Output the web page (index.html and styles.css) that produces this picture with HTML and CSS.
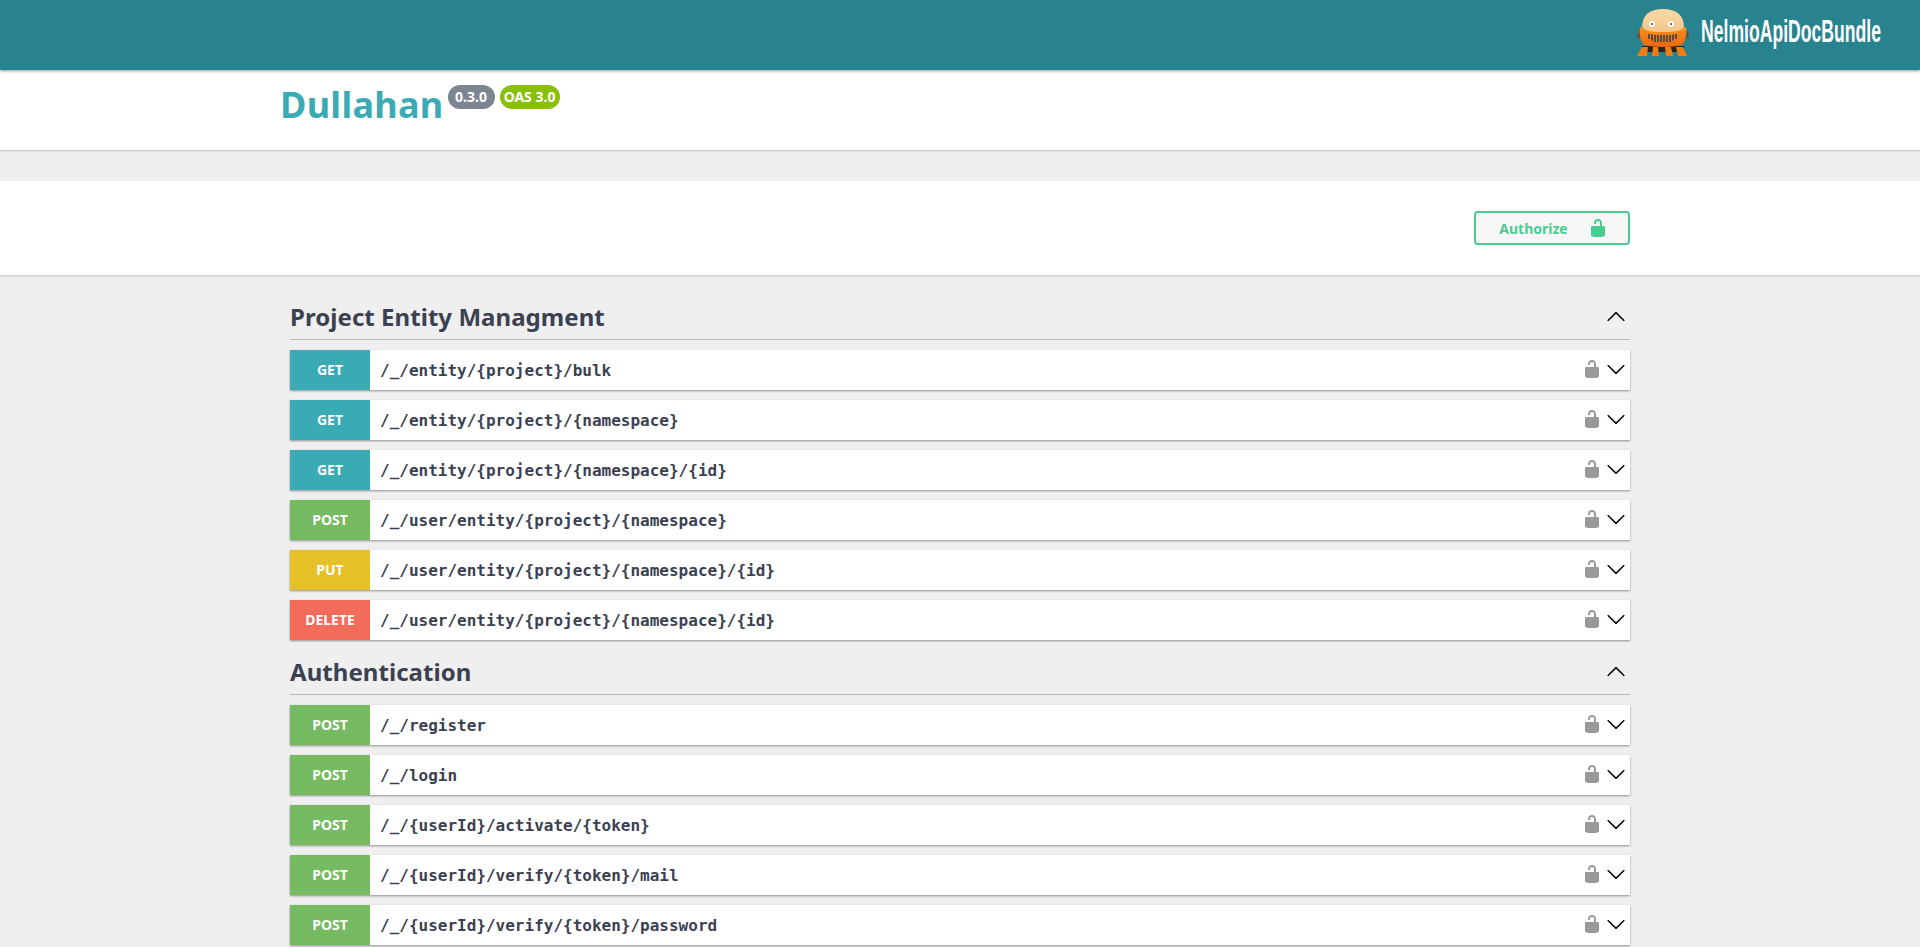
FILE: index.html
```html
<!DOCTYPE html>
<html lang="en">
<head>
    <meta charset="UTF-8">
    <title>Dullahan</title>
    <link rel="stylesheet" href="styles.css">
</head>
<body>
    <svg class="icon-defs" width="0" height="0">
        <symbol id="unlocked" viewBox="0 0 20 20">
            <path d="M15.8 8H14V5.6C14 2.703 12.665 1 10 1 7.334 1 6 2.703 6 5.6V6h2v-.801C8 3.754 8.797 3 10 3c1.203 0 2 .754 2 2.199V8H4c-.553 0-1 .646-1 1.199V17c0 .549.428 1.139.951 1.307l1.197.387C5.672 18.861 6.55 19 7.1 19h5.8c.549 0 1.428-.139 1.951-.307l1.196-.387c.524-.167.953-.757.953-1.306V9.199C17 8.646 16.352 8 15.8 8z"/>
        </symbol>
        <symbol id="arrow" viewBox="0 0 20 20">
            <path d="M17.418 6.109c.272-.268.709-.268.979 0s.271.701 0 .969l-7.908 7.83c-.27.268-.707.268-.979 0l-7.908-7.83c-.27-.268-.27-.701 0-.969.271-.268.709-.268.979 0L10 13.25l7.418-7.141z"/>
        </symbol>
    </svg>

    <div class="topbar">
        <svg class="mascot" width="70" height="66" viewBox="0 0 70 66">
            <defs>
                <linearGradient id="dome" x1="0" y1="0" x2="0" y2="1">
                    <stop offset="0" stop-color="#f8d9a8"/>
                    <stop offset="1" stop-color="#f3c58a"/>
                </linearGradient>
                <linearGradient id="shell" x1="0" y1="0" x2="0" y2="1">
                    <stop offset="0" stop-color="#f7931e"/>
                    <stop offset="1" stop-color="#e8650f"/>
                </linearGradient>
            </defs>
            <path d="M12 46h42v6H12z" fill="#2b2420"/>
            <path d="M7 56l5-9h6l-1 9zM22 56l1-9h5l1 9zM36 56l-1-9h6l2 9zM48 56l-2-9h7l4 9z" fill="#f07d14"/>
            <path d="M8 31l-1 6 4 2 2-7zM53 32l2 7 4-2-1-6z" fill="#55524e"/>
            <path d="M10 27c7 3 39 3 46 0 1 6 0 13-3 17-3 4-37 4-40 0-3-4-4-11-3-17z" fill="url(#shell)"/>
            <path d="M12 27c0-12 8-18 21-18s21 6 21 18c-2 3-7 5-21 5s-19-2-21-5z" fill="url(#dome)"/>
            <circle cx="22" cy="24" r="3" fill="#fff"/>
            <circle cx="41" cy="24" r="3" fill="#fff"/>
            <circle cx="22" cy="24" r="1" fill="#444"/>
            <circle cx="41" cy="24" r="1" fill="#444"/>
            <path d="M19 34v5M22 34.500v6M25 35v7M28 35v7M31 35v7M34 35v7M37 35v7M40 35v7M43 34.500v6M46 34v5" stroke="#5a4a3c" stroke-width="2" fill="none"/>
        </svg>
        <span class="brand">NelmioApiDocBundle</span>
    </div>

    <div class="info">
        <div class="wrapper info-inner">
            <h1 class="title">Dullahan</h1>
            <span class="badge badge-version">0.3.0</span>
            <span class="badge badge-oas">OAS 3.0</span>
        </div>
    </div>

    <div class="schemes">
        <div class="wrapper schemes-inner">
            <button class="authorize">
                <span>Authorize</span>
                <svg width="20" height="20"><use href="#unlocked"/></svg>
            </button>
        </div>
    </div>

    <div class="wrapper ops">
        <div class="tag">
            <h3>Project Entity Managment</h3>
            <svg width="20" height="20" class="arrow-up"><use href="#arrow"/></svg>
        </div>
        <div class="op"><span class="method get">GET</span><span class="path">/_/entity/{project}/bulk</span><svg width="20" height="20" class="lock"><use href="#unlocked"/></svg><svg width="20" height="20" class="arrow"><use href="#arrow"/></svg></div>
        <div class="op"><span class="method get">GET</span><span class="path">/_/entity/{project}/{namespace}</span><svg width="20" height="20" class="lock"><use href="#unlocked"/></svg><svg width="20" height="20" class="arrow"><use href="#arrow"/></svg></div>
        <div class="op"><span class="method get">GET</span><span class="path">/_/entity/{project}/{namespace}/{id}</span><svg width="20" height="20" class="lock"><use href="#unlocked"/></svg><svg width="20" height="20" class="arrow"><use href="#arrow"/></svg></div>
        <div class="op"><span class="method post">POST</span><span class="path">/_/user/entity/{project}/{namespace}</span><svg width="20" height="20" class="lock"><use href="#unlocked"/></svg><svg width="20" height="20" class="arrow"><use href="#arrow"/></svg></div>
        <div class="op"><span class="method put">PUT</span><span class="path">/_/user/entity/{project}/{namespace}/{id}</span><svg width="20" height="20" class="lock"><use href="#unlocked"/></svg><svg width="20" height="20" class="arrow"><use href="#arrow"/></svg></div>
        <div class="op"><span class="method delete">DELETE</span><span class="path">/_/user/entity/{project}/{namespace}/{id}</span><svg width="20" height="20" class="lock"><use href="#unlocked"/></svg><svg width="20" height="20" class="arrow"><use href="#arrow"/></svg></div>

        <div class="tag">
            <h3>Authentication</h3>
            <svg width="20" height="20" class="arrow-up"><use href="#arrow"/></svg>
        </div>
        <div class="op"><span class="method post">POST</span><span class="path">/_/register</span><svg width="20" height="20" class="lock"><use href="#unlocked"/></svg><svg width="20" height="20" class="arrow"><use href="#arrow"/></svg></div>
        <div class="op"><span class="method post">POST</span><span class="path">/_/login</span><svg width="20" height="20" class="lock"><use href="#unlocked"/></svg><svg width="20" height="20" class="arrow"><use href="#arrow"/></svg></div>
        <div class="op"><span class="method post">POST</span><span class="path">/_/{userId}/activate/{token}</span><svg width="20" height="20" class="lock"><use href="#unlocked"/></svg><svg width="20" height="20" class="arrow"><use href="#arrow"/></svg></div>
        <div class="op"><span class="method post">POST</span><span class="path">/_/{userId}/verify/{token}/mail</span><svg width="20" height="20" class="lock"><use href="#unlocked"/></svg><svg width="20" height="20" class="arrow"><use href="#arrow"/></svg></div>
        <div class="op"><span class="method post">POST</span><span class="path">/_/{userId}/verify/{token}/password</span><svg width="20" height="20" class="lock"><use href="#unlocked"/></svg><svg width="20" height="20" class="arrow"><use href="#arrow"/></svg></div>
    </div>
</body>
</html>
```

FILE: styles.css
```css
html, body {
    margin: 0;
    height: 100%;
    overflow: hidden;
}

body {
    background-color: #efefef;
    color: #3b4151;
    font-family: "Noto Sans", sans-serif;
}

.icon-defs {
    position: absolute;
}

.wrapper {
    width: 1340px;
    margin: 0 auto;
}

/* top bar */
.topbar {
    display: flex;
    align-items: center;
    justify-content: flex-end;
    height: 70px;
    padding-right: 40px;
    background-color: #28838f;
    box-shadow: 0 1px 3px rgba(0, 0, 0, 0.4);
    position: relative;
}

.mascot {
    margin-right: 1px;
    margin-top: -4px;
}

.brand {
    width: 179px;
    margin-top: -7px;
    font-family: "Liberation Sans", sans-serif;
    font-size: 32px;
    font-weight: bold;
    color: #fff;
    white-space: nowrap;
    transform: scaleX(0.55);
    transform-origin: left center;
}

/* title */
.info {
    height: 80px;
    background-color: #fff;
    border-bottom: 1px solid #ccc;
    box-shadow: 0 1px 1px rgba(0, 0, 0, 0.05);
}

.info-inner {
    display: flex;
    align-items: flex-start;
    padding-top: 15px;
    box-sizing: border-box;
    position: relative;
    left: -10px;
}

.title {
    margin: -5px 4px 0 0;
    font-size: 36px;
    line-height: 49px;
    font-weight: bold;
    letter-spacing: 0.3px;
    color: #3aabb5;
}

.badge {
    height: 24px;
    margin-right: 5px;
    border-radius: 12px;
    font-size: 14px;
    font-weight: bold;
    line-height: 24px;
    text-align: center;
    color: #fff;
}

.badge-version {
    width: 47px;
    background-color: #7d8492;
}

.badge-oas {
    width: 60px;
    background-color: #89bf04;
}

/* authorize */
.schemes {
    height: 94px;
    margin-top: 30px;
    background-color: #fff;
    box-shadow: 0 1px 2px rgba(0, 0, 0, 0.2);
}

.schemes-inner {
    display: flex;
    justify-content: flex-end;
    padding-top: 30px;
}

.authorize {
    display: flex;
    align-items: center;
    justify-content: center;
    gap: 20px;
    width: 156px;
    height: 34px;
    padding: 0 0 0 3px;
    background-color: #f7f7f7;
    border: 2px solid #49cc90;
    border-radius: 4px;
    font-family: "Noto Sans", sans-serif;
    font-size: 14px;
    font-weight: bold;
    color: #49cc90;
}

.authorize svg {
    fill: #49cc90;
}

/* operations */
.ops {
    padding-top: 20px;
}

.tag {
    display: flex;
    align-items: center;
    justify-content: space-between;
    height: 44px;
    margin-bottom: 10px;
    padding-right: 4px;
    border-bottom: 1px solid rgba(59, 65, 81, 0.3);
}

.tag h3 {
    margin: -2px 0 0;
    font-size: 24px;
    font-weight: bold;
    letter-spacing: 0.05px;
}

.arrow-up {
    transform: rotate(180deg);
}

.op {
    display: flex;
    align-items: center;
    height: 40px;
    margin-bottom: 10px;
    padding-right: 4px;
    background-color: #fff;
    box-shadow: 0 1px 2px rgba(0, 0, 0, 0.4);
}

.method {
    align-self: stretch;
    width: 80px;
    font-size: 14px;
    font-weight: bold;
    line-height: 40px;
    text-align: center;
    color: #fff;
}

.get { background-color: #3aabb5; }
.post { background-color: #76bb62; }
.put { background-color: #e5c027; }
.delete { background-color: #f26b5b; }

.path {
    flex: 1;
    padding-left: 10px;
    font-family: "DejaVu Sans Mono", monospace;
    font-size: 16px;
    font-weight: bold;
}

.lock {
    margin: -2px 4px 0 0;
    fill: #999;
}

.arrow {
    margin-top: -2px;
}
```
